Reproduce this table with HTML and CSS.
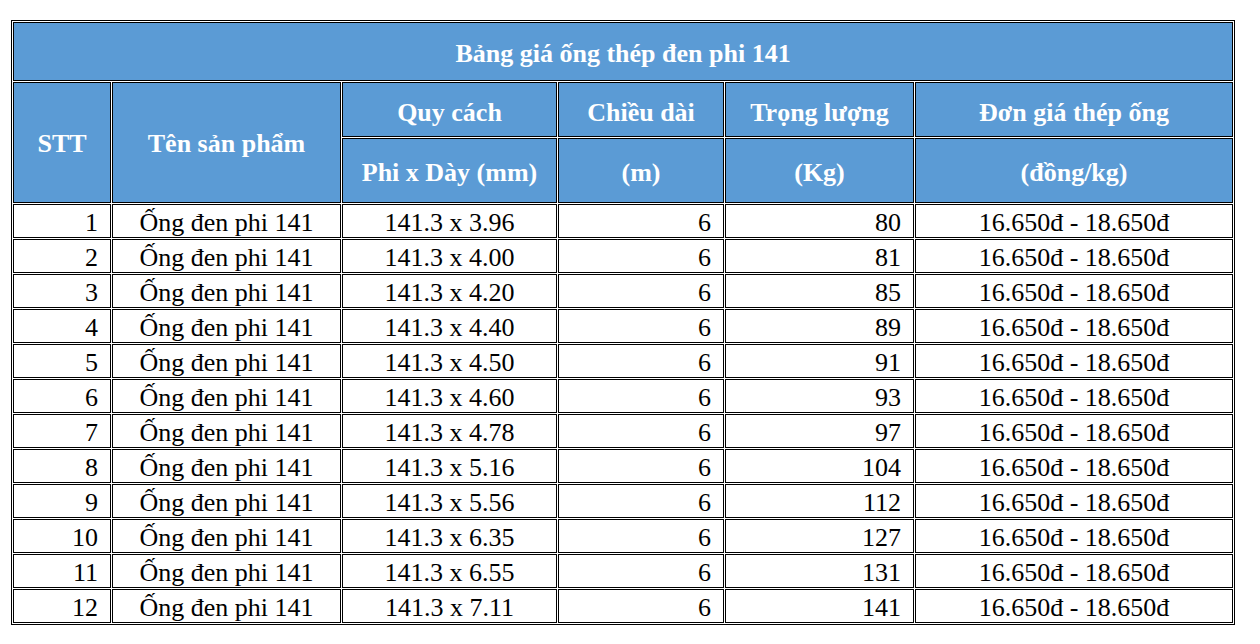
FILE: index.html
```html
<!DOCTYPE html>
<html lang="vi">
<head>
<meta charset="utf-8">
<title>Bảng giá ống thép đen phi 141</title>
<link rel="stylesheet" href="styles.css">
</head>
<body>
<table class="price">
  <colgroup>
    <col class="c-stt">
    <col class="c-name">
    <col class="c-spec">
    <col class="c-len">
    <col class="c-wt">
    <col class="c-price">
  </colgroup>
  <thead>
    <tr class="r-title"><th colspan="6">Bảng giá ống thép đen phi 141</th></tr>
    <tr class="r-h1">
      <th rowspan="2" class="span">STT</th>
      <th rowspan="2" class="span">Tên sản phẩm</th>
      <th>Quy cách</th>
      <th>Chiều dài</th>
      <th>Trọng lượng</th>
      <th>Đơn giá thép ống</th>
    </tr>
    <tr class="r-h2">
      <th>Phi x Dày (mm)</th>
      <th>(m)</th>
      <th>(Kg)</th>
      <th>(đồng/kg)</th>
    </tr>
  </thead>
  <tbody>
    <tr><td class="num">1</td><td>Ống đen phi 141</td><td>141.3 x 3.96</td><td class="num">6</td><td class="num">80</td><td>16.650đ - 18.650đ</td></tr>
    <tr><td class="num">2</td><td>Ống đen phi 141</td><td>141.3 x 4.00</td><td class="num">6</td><td class="num">81</td><td>16.650đ - 18.650đ</td></tr>
    <tr><td class="num">3</td><td>Ống đen phi 141</td><td>141.3 x 4.20</td><td class="num">6</td><td class="num">85</td><td>16.650đ - 18.650đ</td></tr>
    <tr><td class="num">4</td><td>Ống đen phi 141</td><td>141.3 x 4.40</td><td class="num">6</td><td class="num">89</td><td>16.650đ - 18.650đ</td></tr>
    <tr><td class="num">5</td><td>Ống đen phi 141</td><td>141.3 x 4.50</td><td class="num">6</td><td class="num">91</td><td>16.650đ - 18.650đ</td></tr>
    <tr><td class="num">6</td><td>Ống đen phi 141</td><td>141.3 x 4.60</td><td class="num">6</td><td class="num">93</td><td>16.650đ - 18.650đ</td></tr>
    <tr><td class="num">7</td><td>Ống đen phi 141</td><td>141.3 x 4.78</td><td class="num">6</td><td class="num">97</td><td>16.650đ - 18.650đ</td></tr>
    <tr><td class="num">8</td><td>Ống đen phi 141</td><td>141.3 x 5.16</td><td class="num">6</td><td class="num">104</td><td>16.650đ - 18.650đ</td></tr>
    <tr><td class="num">9</td><td>Ống đen phi 141</td><td>141.3 x 5.56</td><td class="num">6</td><td class="num">112</td><td>16.650đ - 18.650đ</td></tr>
    <tr><td class="num">10</td><td>Ống đen phi 141</td><td>141.3 x 6.35</td><td class="num">6</td><td class="num">127</td><td>16.650đ - 18.650đ</td></tr>
    <tr><td class="num">11</td><td>Ống đen phi 141</td><td>141.3 x 6.55</td><td class="num">6</td><td class="num">131</td><td>16.650đ - 18.650đ</td></tr>
    <tr><td class="num">12</td><td>Ống đen phi 141</td><td>141.3 x 7.11</td><td class="num">6</td><td class="num">141</td><td>16.650đ - 18.650đ</td></tr>
  </tbody>
</table>
</body>
</html>
```

FILE: styles.css
```css
html, body {
  margin: 0;
  padding: 0;
  background: #ffffff;
}

body {
  padding: 20px 0 0 11px;
  font-family: "Liberation Serif", "Times New Roman", serif;
}

.price {
  table-layout: fixed;
  width: 1224px;
  border-collapse: separate;
  border-spacing: 1px;
  border: 1px solid #000;
  font-size: 26px;
  color: #000;
}

.c-stt { width: 98px; }
.c-name { width: 229px; }
.c-spec { width: 215px; }
.c-len { width: 166px; }
.c-wt { width: 189px; }
.c-price { width: 318px; }

.price th,
.price td {
  box-sizing: border-box;
  border: 1px solid #000;
  padding: 4px 0 0 0;
  vertical-align: middle;
  text-align: center;
  line-height: normal;
  white-space: nowrap;
}

.price th {
  background: #5b9bd5;
  color: #ffffff;
  font-weight: bold;
}

.r-title th { height: 59px; }
.r-h1 th { height: 55px; padding-top: 6px; }
.r-h1 th.span { padding-top: 2px; }
.r-h2 th { height: 65px; }

.price td {
  height: 34px;
  line-height: 26px;
  font-weight: normal;
}

.price td.num {
  text-align: right;
  padding-right: 12px;
}
```
